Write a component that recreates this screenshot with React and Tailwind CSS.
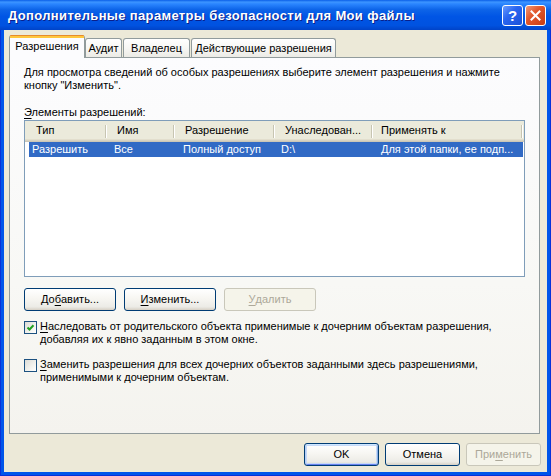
import React from 'react';

const COLUMNS = [
  { title: 'Тип', width: 'w-[82px]', headPad: 'pl-[11px]', value: 'Разрешить', rowWidth: 'w-[78px]', rowPad: 'pl-[3px]' },
  { title: 'Имя', width: 'w-[68px]', headPad: 'pl-[10px]', value: 'Все', rowWidth: 'w-[68px]', rowPad: 'pl-[7px]' },
  { title: 'Разрешение', width: 'w-[100px]', headPad: 'pl-[10px]', value: 'Полный доступ', rowWidth: 'w-[100px]', rowPad: 'pl-[8px]' },
  { title: 'Унаследован...', width: 'w-[98px]', headPad: 'pl-[10px]', value: 'D:\\', rowWidth: 'w-[98px]', rowPad: 'pl-[6px]' },
  { title: 'Применять к', width: 'w-[150px]', headPad: 'pl-[8px]', value: 'Для этой папки, ее подп...', rowWidth: 'w-[150px]', rowPad: 'pl-[8px]' },
];

function XpButton({ children, isDefault, disabled }) {
  return (
    <button
      type="button"
      disabled={disabled}
      className={`flex h-[23px] w-full items-center justify-center rounded-[3px] border text-[11px] leading-[13px] ${
        disabled
          ? 'border-[#c9c7ba] bg-[#f5f4ea] text-[#aca899]'
          : 'border-[#003c74] bg-[linear-gradient(180deg,#ffffff_0%,#f7f6f2_45%,#ecebe6_85%,#d6d0c5_100%)] text-black'
      } ${isDefault ? 'shadow-[inset_0_1px_0_#cee7ff,inset_1px_0_0_#b6cef5,inset_-1px_0_0_#89ade4,inset_0_-1px_0_#6982ee,inset_0_0_0_2px_#c5d9f7]' : ''}`}
    >
      {children}
    </button>
  );
}

function Checkbox({ checked }) {
  return (
    <span className="mt-px flex size-[13px] shrink-0 items-center justify-center border border-[#1c5180] bg-[linear-gradient(135deg,#dcdcd7_0%,#f2f2ee_60%,#ffffff_100%)]">
      {checked && (
        <svg width="11" height="11" viewBox="0 0 11 11">
          <path d="M2.5 5.5 L4.5 7.5 L8.5 3.2" fill="none" stroke="#21a121" strokeWidth="2" />
        </svg>
      )}
    </span>
  );
}

function Tab({ label, selected, width }) {
  if (selected) {
    return (
      <div
        className={`relative z-10 -mb-px flex h-[23px] ${width} flex-col rounded-t-[3px] border-x border-[#919b9c] bg-[#fcfcfe]`}
      >
        <div className="h-px rounded-t-[3px] bg-[#e68b2c]" />
        <div className="h-[2px] bg-[#ffc73c]" />
        <div className="flex flex-1 items-center justify-center pb-[3px]">{label}</div>
      </div>
    );
  }
  return (
    <div
      className={`flex h-[19px] ${width} items-center justify-center rounded-t-[3px] border-x border-t border-[#919b9c] bg-[linear-gradient(180deg,#ffffff_0%,#f7f7f4_50%,#ecebe6_100%)]`}
    >
      {label}
    </div>
  );
}

export default function App() {
  return (
    <div className="flex h-[476px] w-[551px] flex-col border-x border-b border-[#0831d9] bg-[#0055ea] font-['Liberation_Sans',Arial,sans-serif] text-[11px] leading-[13px] text-black">
      {/* title bar */}
      <div className="-mx-px flex h-[30px] shrink-0 items-center bg-[linear-gradient(180deg,#0a5fe8_0%,#3d95ff_7%,#2b86ff_13%,#0d64e8_32%,#0055e5_55%,#0052e0_85%,#0043c8_100%)] pl-[8px] pr-[5px]">
        <div className="flex-1 text-[13px] font-bold tracking-[0.35px] text-white [text-shadow:1px_1px_0_#0a1f8a]">
          Дополнительные параметры безопасности для Мои файлы
        </div>
        <div className="flex gap-[2px]">
          <div className="flex size-[21px] items-center justify-center rounded-[3px] border border-white bg-[linear-gradient(135deg,#6a9cff_0%,#2a66f0_40%,#1a50d8_100%)] text-[15px] font-bold leading-none text-white">
            ?
          </div>
          <div className="flex size-[21px] items-center justify-center rounded-[3px] border border-white bg-[linear-gradient(135deg,#f09a78_0%,#e2582d_40%,#c83c14_100%)]">
            <svg width="11" height="11" viewBox="0 0 11 11">
              <path d="M1.5 1.5 L9.5 9.5 M9.5 1.5 L1.5 9.5" stroke="#ffffff" strokeWidth="2" strokeLinecap="square" />
            </svg>
          </div>
        </div>
      </div>

      {/* client area */}
      <div className="mx-[3px] mb-[3px] flex flex-1 flex-col bg-[#ece9d8]">
        <div className="ml-[5px] mt-[5px] flex items-end">
          <Tab label="Разрешения" selected width="w-[76px]" />
          <Tab label="Аудит" width="w-[37px]" />
          <div className="ml-px">
            <Tab label="Владелец" width="w-[67px]" />
          </div>
          <div className="ml-px">
            <Tab label="Действующие разрешения" width="w-[145px]" />
          </div>
        </div>

        <div className="ml-[5px] flex h-[377px] w-[531px] flex-col border border-[#919b9c] bg-[linear-gradient(180deg,#fcfcfe_0%,#f8f8f5_60%,#f4f3ee_100%)] px-[14px] pt-[8px]">
          <p>
            Для просмотра сведений об особых разрешениях выберите элемент разрешения и нажмите
            <br />
            кнопку "Изменить".
          </p>
          <p className="mt-[14px]">
            <u className="underline-offset-[2px]">Э</u>лементы разрешений:
          </p>

          <div className="mt-px h-[157px] border border-[#7f9db9] bg-white">
            <div className="flex h-[21px] bg-[#ebeadb] shadow-[inset_0_-1px_0_#cbc7b8,inset_0_-2px_0_#d6d2c2,inset_0_-3px_0_#e2decd]">
              {COLUMNS.map((col) => (
                <div key={col.title} className={`flex ${col.width}`}>
                  <span className={`flex flex-1 items-center pb-[2px] ${col.headPad}`}>{col.title}</span>
                  <div className="my-[4px] w-[2px] border-l border-[#c7c5b2] bg-white" />
                </div>
              ))}
            </div>
            <div className="ml-[4px] flex h-[15px] w-[494px] items-center bg-[#316ac5] text-white">
              {COLUMNS.map((col) => (
                <span key={col.title} className={`whitespace-nowrap ${col.rowWidth} ${col.rowPad}`}>
                  {col.value}
                </span>
              ))}
            </div>
          </div>

          <div className="mt-[11px] flex gap-[8px]">
            <div className="w-[92px]">
              <XpButton>
                До<u className="underline-offset-[2px]">б</u>авить...
              </XpButton>
            </div>
            <div className="w-[92px]">
              <XpButton>
                <u className="underline-offset-[2px]">И</u>зменить...
              </XpButton>
            </div>
            <div className="w-[92px]">
              <XpButton disabled>
                <u className="underline-offset-[2px]">У</u>далить
              </XpButton>
            </div>
          </div>

          <div className="mt-[9px] flex gap-[3px]">
            <Checkbox checked />
            <p>
              <u className="underline-offset-[2px]">Н</u>аследовать от родительского объекта применимые к дочерним объектам разрешения,
              <br />
              добавляя их к явно заданным в этом окне.
            </p>
          </div>

          <div className="mt-[12px] flex gap-[3px]">
            <Checkbox />
            <p>
              <u className="underline-offset-[2px]">З</u>аменить разрешения для всех дочерних объектов заданными здесь разрешениями,
              <br />
              применимыми к дочерним объектам.
            </p>
          </div>
        </div>

        <div className="mt-[9px] flex justify-end gap-[6px] pr-[6px]">
          <div className="w-[75px]">
            <XpButton isDefault>OK</XpButton>
          </div>
          <div className="w-[75px]">
            <XpButton>Отмена</XpButton>
          </div>
          <div className="w-[75px]">
            <XpButton disabled>
              При<u className="underline-offset-[2px]">м</u>енить
            </XpButton>
          </div>
        </div>
      </div>
    </div>
  );
}
